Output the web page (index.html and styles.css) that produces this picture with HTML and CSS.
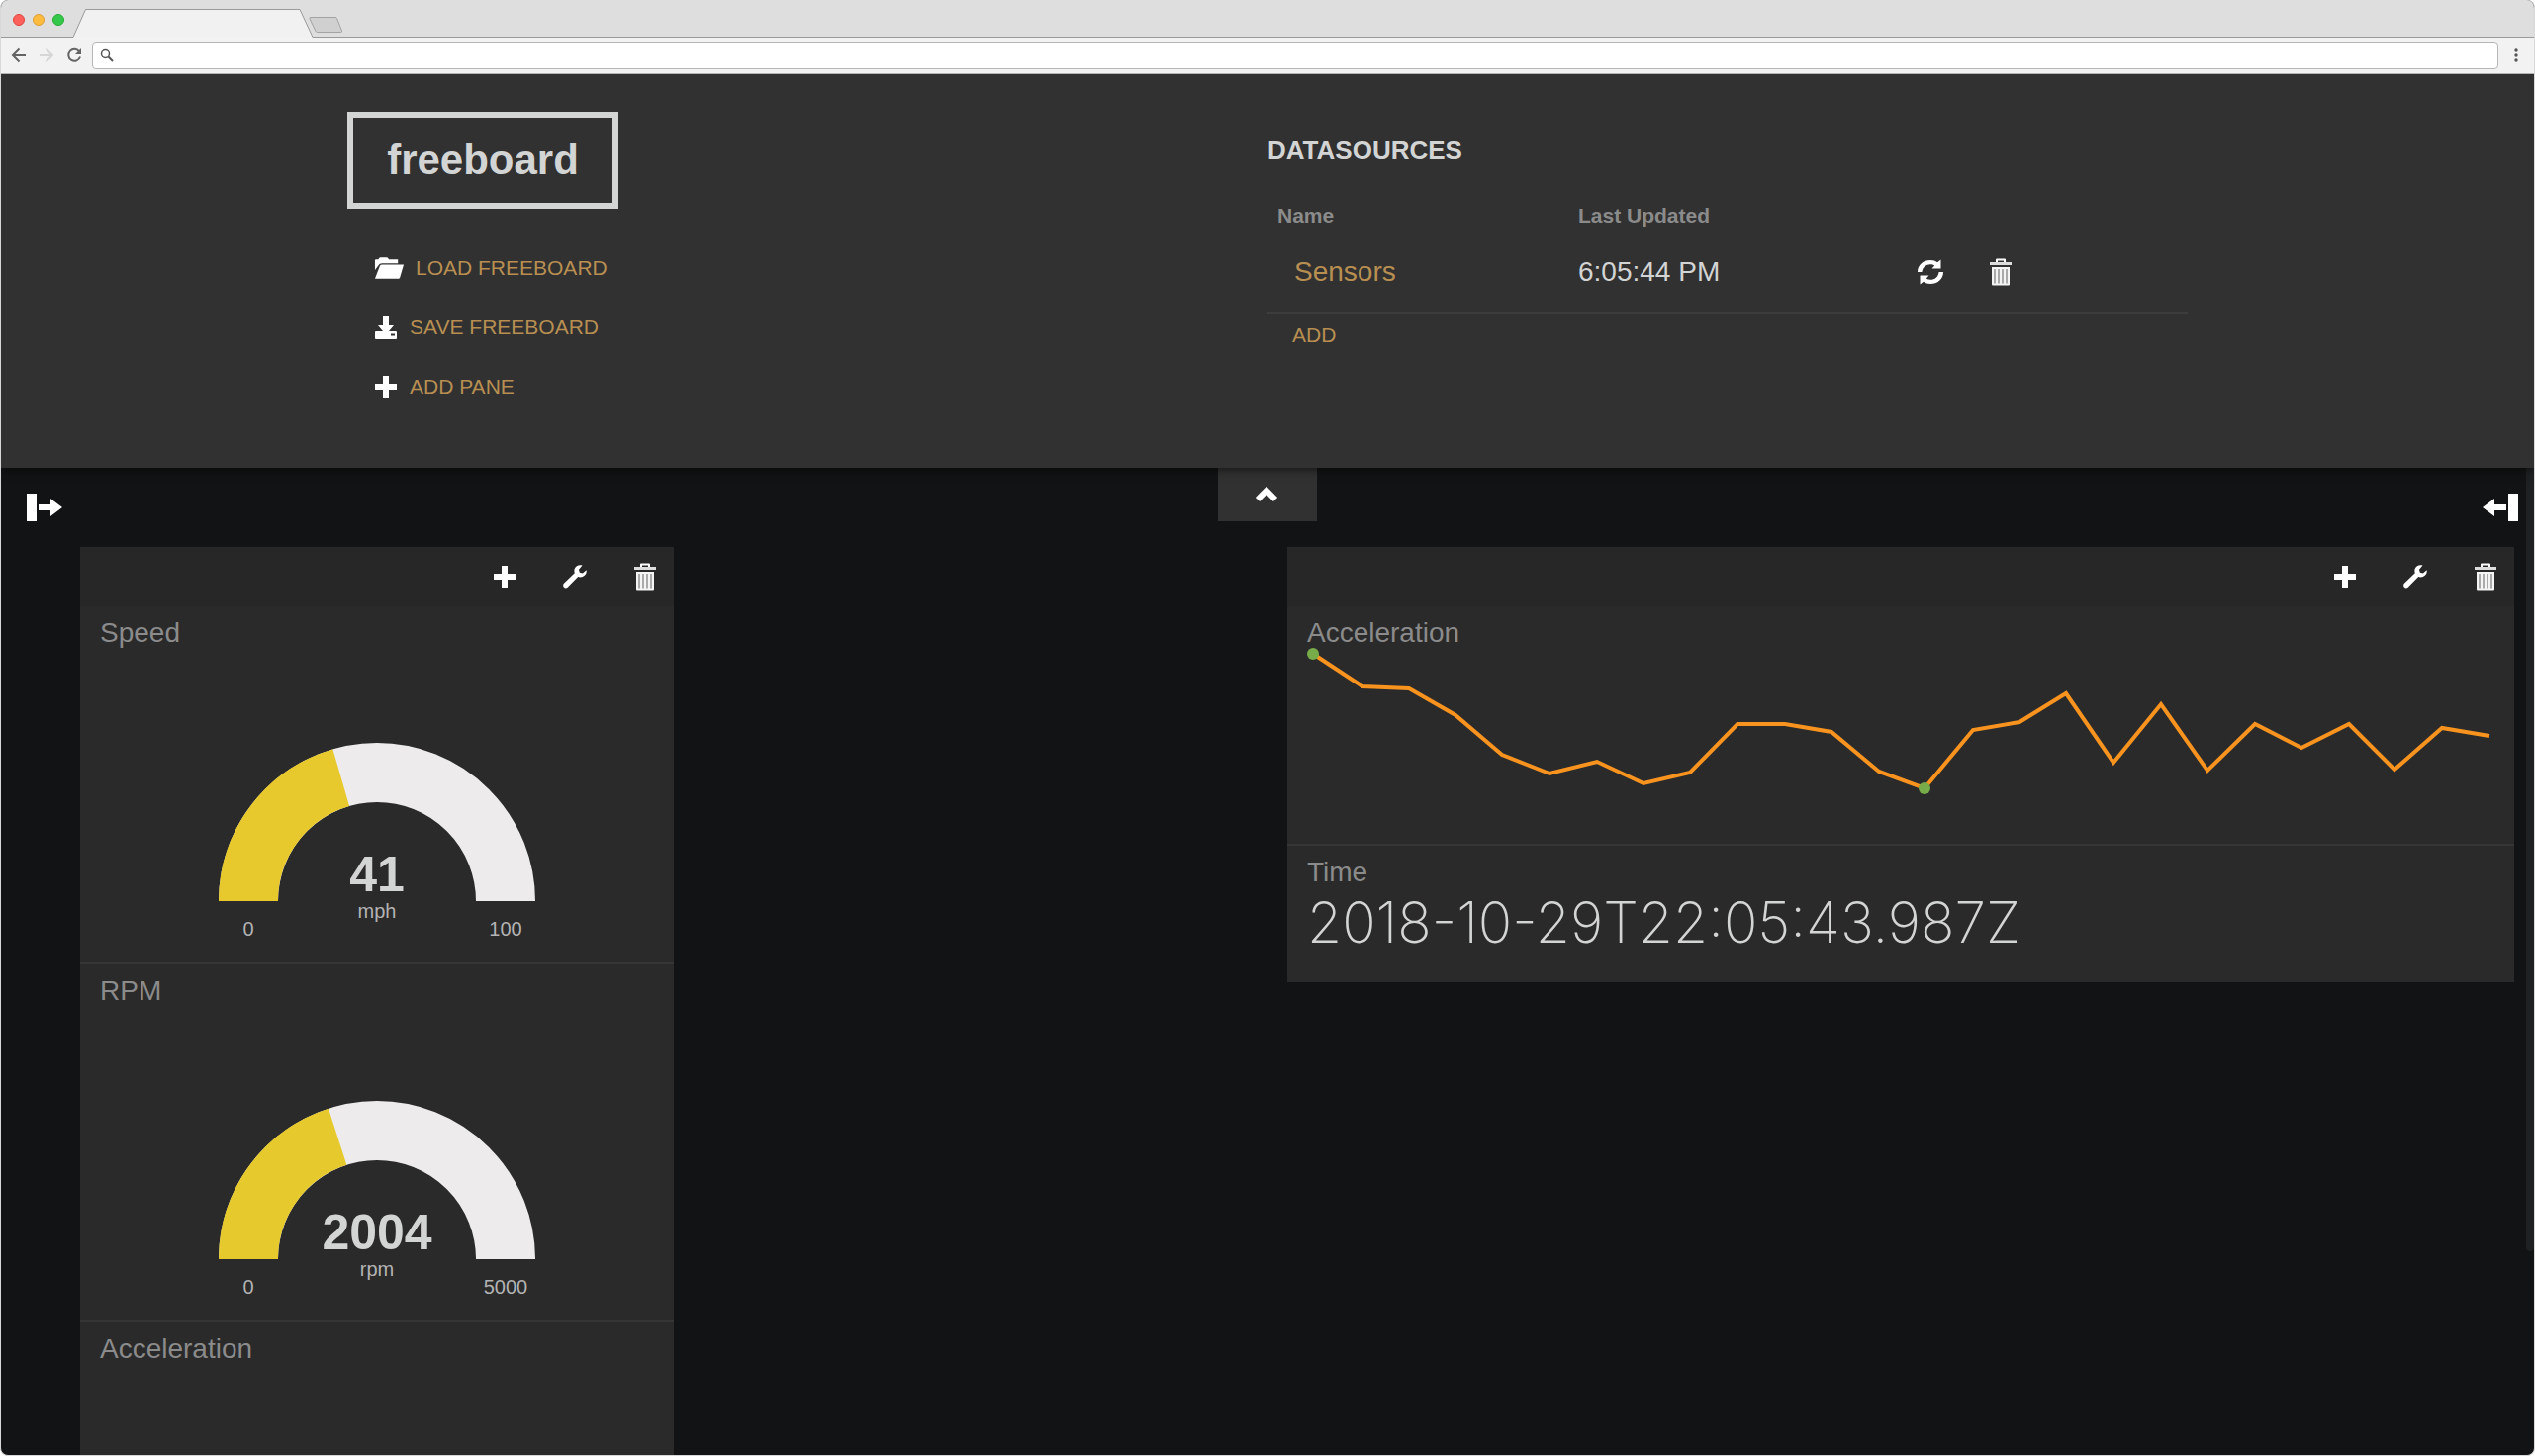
FILE: index.html
```html
<!DOCTYPE html>
<html lang="en">
<head>
<meta charset="utf-8">
<title>freeboard</title>
<link rel="stylesheet" href="styles.css">
</head>
<body>
<svg class="symbols" aria-hidden="true">
  <symbol id="i-plus" viewBox="0 0 24 24"><path d="M9 1h6v8h8v6h-8v8H9v-8H1V9h8z"/></symbol>
  <symbol id="i-wrench" viewBox="0 0 24 24"><path d="M19.500 .6C16.500-.5 12.800 .8 11.700 4c-.5 1.500-.4 2.900 .1 4.200L.9 18.800c-1 1-1 2.700 0 3.800 1 1.100 2.700 1.100 3.700 .1L15.200 12.100c1.400 .5 3 .5 4.500 0 3-1.100 4.600-4 3.900-6.800l-3.700 3.200-3.100-.7-.8-3.100z"/></symbol>
  <symbol id="i-trash" viewBox="0 0 24 28"><path fill="#fff" d="M7 4V1.500Q7 .5 8 .5h8q1 0 1 1V4h-2V2.500H9V4z"/><path fill="#ddd" d="M1 4h22v3H1z"/><path fill="#f4f4f4" d="M3 9h18v17.500q0 1-1 1H4q-1 0-1-1z"/><path fill="#aaa" d="M5 11h2v14.500H5zM9 11h2v14.500H9zM13 11h2v14.500h-2zM17 11h2v14.500h-2z"/></symbol>
  <symbol id="i-refresh" viewBox="0 0 26 26"><path d="M0 13C0 5.500 6 1 13 1c3 0 5 .8 7 2.200L23.500 .5V9.500H14.500L17.200 6.400C16 5.600 14.700 5.200 13 5.200 8.500 5.200 5 8 4.400 13z"/><path d="M26 13c0 7.500-6 12-13 12-3 0-5-.8-7-2.200L2.500 25.500V16.500H11.500L8.800 19.600c1.200 .8 2.500 1.200 4.200 1.200 4.500 0 8-2.800 8.600-7.800z"/></symbol>
  <symbol id="i-folder" viewBox="0 0 31 24"><path d="M1 14V4q0-1 1-1h2.500l1-1.500q.3-.5 1-.5h7q.7 0 1 .5l1 1.500H25v4H8.500Q5.500 7 4.500 9.500z"/><path d="M8.500 8.500H31L27 22q-.3 1-1.400 1H1L6 10q.6-1.500 2.500-1.500z"/></symbol>
  <symbol id="i-save" viewBox="0 0 24 26"><path fill-rule="evenodd" d="M9 1h6v10h5l-5 6h7q1 0 1 1v6q0 1-1 1H2q-1 0-1-1v-6q0-1 1-1h7l-5-6h5zM17 19.500v2h4v-2z"/></symbol>
  <symbol id="i-arrow" viewBox="0 0 24 20"><path d="M0 7h12V1l12 9-12 9v-6H0z"/></symbol>
</svg>

<div class="browser">
  <div class="titlebar">
    <div class="lights"><i class="light red"></i><i class="light yellow"></i><i class="light green"></i></div>
    <svg class="tab" width="244" height="29" viewBox="0 0 244 29" aria-hidden="true"><path d="M0 28.500H1L13.500 .5H230L243 28.500H244V29H0z" fill="#f1f1f1"/><path d="M0 28.500H1L13.500 .5H230L243 28.500h1" fill="none" stroke="#999"/></svg>
    <svg class="newtab" width="36" height="18" viewBox="0 0 36 18" aria-hidden="true"><path d="M3 1.500h25q1 0 1.500 1l5 12.500q.5 1.500-1 1.500H10q-1.500 0-2-1L2 3q-.5-1.500 1-1.500z" fill="#d0d0d0" stroke="#a3a3a3"/></svg>
  </div>
  <div class="toolbar">
    <button class="nav" aria-label="Back"><svg width="16" height="16" viewBox="0 0 16 16"><path d="M15 8H2M8.500 1.500L2 8l6.500 6.500" fill="none" stroke="#646464" stroke-width="2"/></svg></button>
    <button class="nav" aria-label="Forward"><svg width="16" height="16" viewBox="0 0 16 16"><path d="M1 8h13M7.500 1.500L14 8l-6.500 6.500" fill="none" stroke="#d6d6d6" stroke-width="2"/></svg></button>
    <button class="nav" aria-label="Reload"><svg width="16" height="16" viewBox="0 0 16 16"><path d="M13.300 4.500A6 6 0 1 0 14 9.500" fill="none" stroke="#646464" stroke-width="2"/><path d="M15 1v6H9z" fill="#646464"/></svg></button>
    <label class="address">
      <svg width="14" height="14" viewBox="0 0 14 14" aria-hidden="true"><circle cx="5.500" cy="5.500" r="4" fill="none" stroke="#555" stroke-width="1.500"/><path d="M8.500 8.500L13 13" stroke="#555" stroke-width="2"/></svg>
      <input type="text" aria-label="Address">
    </label>
    <button class="more" aria-label="Menu"><svg width="4" height="16" viewBox="0 0 4 16"><g fill="#555"><circle cx="2" cy="3" r="1.700"/><circle cx="2" cy="8" r="1.700"/><circle cx="2" cy="13" r="1.700"/></g></svg></button>
  </div>

  <header class="admin">
    <div class="admin-inner">
      <div>
        <h1 class="logo">freeboard</h1>
        <nav class="menu">
          <button><svg width="30" height="24"><use href="#i-folder"/></svg>LOAD FREEBOARD</button>
          <button><svg width="24" height="26"><use href="#i-save"/></svg>SAVE FREEBOARD</button>
          <button><svg width="24" height="24"><use href="#i-plus"/></svg>ADD PANE</button>
        </nav>
      </div>
      <section class="sources">
        <h2>DATASOURCES</h2>
        <table>
          <thead><tr><th class="c-name">Name</th><th class="c-time">Last Updated</th><th></th></tr></thead>
          <tbody><tr>
            <td class="source"><a href="#sensors">Sensors</a></td>
            <td>6:05:44 PM</td>
            <td><div class="actions">
              <button aria-label="Refresh"><svg width="26" height="26"><use href="#i-refresh"/></svg></button>
              <button aria-label="Delete"><svg width="24" height="28"><use href="#i-trash"/></svg></button>
            </div></td>
          </tr></tbody>
        </table>
        <button class="add">ADD</button>
      </section>
    </div>
  </header>

  <main class="board">
    <button class="toggle" aria-label="Hide header"><svg width="24" height="18" viewBox="0 0 24 18"><path d="M3 14l9-9 9 9" fill="none" stroke="#fff" stroke-width="6"/></svg></button>
    <div class="scrollbar"></div>
    <div class="columns-bar">
      <button aria-label="Add column left"><i class="bar"></i><svg width="24" height="20"><use href="#i-arrow"/></svg></button>
      <button class="flip" aria-label="Add column right"><i class="bar"></i><svg width="24" height="20"><use href="#i-arrow"/></svg></button>
    </div>
    <div class="panes">
      <section class="pane">
        <div class="pane-head">
          <button aria-label="Add widget"><svg width="24" height="24"><use href="#i-plus"/></svg></button>
          <button aria-label="Edit pane"><svg width="24" height="24"><use href="#i-wrench"/></svg></button>
          <button aria-label="Delete pane"><svg width="24" height="28"><use href="#i-trash"/></svg></button>
        </div>
        <article class="widget tall">
          <h3>Speed</h3>
          <svg class="gauge" width="320" height="200" viewBox="0 0 320 200">
            <path class="track" d="M30 160A130 130 0 0 1 290 160"/>
            <path class="level" pathLength="100" stroke-dasharray="41 100" d="M30 160A130 130 0 0 1 290 160" stroke="#e8c92d"/>
            <text class="value" x="160" y="150">41</text><text x="160" y="177">mph</text><text x="30" y="195">0</text><text x="290" y="195">100</text>
          </svg>
        </article>
        <article class="widget tall">
          <h3>RPM</h3>
          <svg class="gauge" width="320" height="200" viewBox="0 0 320 200">
            <path class="track" d="M30 160A130 130 0 0 1 290 160"/>
            <path class="level" pathLength="100" stroke-dasharray="40.080 100" d="M30 160A130 130 0 0 1 290 160" stroke="#e6c92d"/>
            <text class="value" x="160" y="150">2004</text><text x="160" y="177">rpm</text><text x="30" y="195">0</text><text x="290" y="195">5000</text>
          </svg>
        </article>
        <article class="widget tall"><h3>Acceleration</h3></article>
      </section>

      <section class="pane wide">
        <div class="pane-head">
          <button aria-label="Add widget"><svg width="24" height="24"><use href="#i-plus"/></svg></button>
          <button aria-label="Edit pane"><svg width="24" height="24"><use href="#i-wrench"/></svg></button>
          <button aria-label="Delete pane"><svg width="24" height="28"><use href="#i-trash"/></svg></button>
        </div>
        <article class="widget">
          <h3>Acceleration</h3>
          <svg class="spark" viewBox="0 3 1200 150">
            <polyline points="6,8 56,41 103,43 150,70 197,110 245,129 293,117 340,139 387,128 435,79 483,79 530,87 578,127 624,144 673,85 720,77 767,48 815,118 863,59 910,126 958,79 1005,103 1053,79 1099,125 1147,83 1195,91"/>
            <circle cx="6" cy="8" r="6"/><circle cx="624" cy="144" r="6"/>
          </svg>
        </article>
        <article class="widget">
          <h3>Time</h3>
          <p class="stamp">2018-10-29T22:05:43.987Z</p>
        </article>
      </section>
    </div>
  </main>
</div>
</body>
</html>
```
FILE: styles.css
```css
* { box-sizing: border-box; }

body {
  margin: 0;
  background: #fff;
  font-family: "Liberation Sans", Arial, sans-serif;
}

h1, h2, h3, p { margin: 0; font-weight: normal; }

button {
  display: flex;
  align-items: center;
  padding: 0;
  border: 0;
  background: none;
  color: inherit;
  font: inherit;
  cursor: pointer;
}

svg { display: block; flex: none; fill: #fff; }

.symbols { position: absolute; width: 0; height: 0; }

.browser {
  display: flex;
  flex-direction: column;
  height: 100vh;
  overflow: hidden;
  border: 1px solid #d8d8d8;
  border-top: 0;
  border-radius: 8px;
  background: #121314;
}

/* Browser chrome */
.titlebar {
  display: flex;
  flex: none;
  align-items: flex-end;
  height: 38px;
  padding-left: 12px;
  border-bottom: 1px solid #999;
  background: #dedede;
}

.lights { display: flex; gap: 8px; width: 60px; padding-bottom: 11px; }
.light { width: 12px; height: 12px; border: 1px solid; border-radius: 50%; }
.red { background: #fc605c; border-color: #e0443e; }
.yellow { background: #fdbc40; border-color: #dea034; }
.green { background: #34c84a; border-color: #27aa35; }
.tab { position: relative; z-index: 3; margin-bottom: -1px; }
.newtab { margin: 0 0 3px -6px; }

.toolbar {
  position: relative;
  z-index: 2;
  display: flex;
  flex: none;
  align-items: center;
  height: 37px;
  padding: 0 16px 0 10px;
  border-bottom: 1px solid #b4b4b4;
  background: #f2f2f2;
}

.nav { padding-right: 12px; }

.address {
  display: flex;
  flex: 1;
  align-items: center;
  gap: 8px;
  height: 28px;
  margin: 0 16px 0 -2px;
  padding: 0 7px;
  border: 1px solid #b6b6b6;
  border-radius: 4px;
  background: #fff;
}

.address input { flex: 1; border: 0; outline: 0; background: none; font: inherit; }

/* Admin header */
.admin {
  position: relative;
  z-index: 1;
  flex: none;
  padding: 38px 0 70px;
  background: #313131;
  box-shadow: 0 0 10px rgba(0, 0, 0, .8);
  color: #d3d4d4;
}

.admin-inner {
  display: grid;
  grid-template-columns: 1fr 1fr;
  max-width: 1860px;
  margin: 0 auto;
}

.logo {
  width: 274px;
  border: 6px solid #d3d4d4;
  font-size: 42px;
  font-weight: bold;
  line-height: 86px;
  text-align: center;
}

.menu {
  display: flex;
  flex-direction: column;
  align-items: flex-start;
  gap: 36px;
  padding: 48px 0 0 27px;
}

.menu button, .add { height: 24px; color: #b88f51; font-size: 21px; line-height: 24px; }
.menu button { gap: 12px; }

.sources h2 {
  padding-top: 24px;
  font-size: 26px;
  font-weight: bold;
  line-height: 30px;
}

.sources table {
  width: 100%;
  margin-top: 39px;
  border-bottom: 2px solid #3d3d3d;
  border-collapse: collapse;
  table-layout: fixed;
  text-align: left;
}

.c-name { width: 304px; }
.c-time { width: 343px; }
.sources th { padding: 0 10px; color: #8b8b8b; font-size: 21px; line-height: 24px; }
.sources td { padding: 29px 10px 24px; font-size: 28px; line-height: 32px; }
.sources .source { padding-left: 27px; }
.source a { color: #b88f51; text-decoration: none; }
.actions { display: flex; gap: 46px; height: 32px; }
.add { margin: 10px 0 0 25px; }

/* Board */
.board { position: relative; flex: 1; min-height: 0; overflow: hidden; }

.toggle {
  position: absolute;
  top: 0;
  left: 50%;
  justify-content: center;
  width: 100px;
  height: 54px;
  margin-left: -50px;
  padding-right: 2px;
  background: #313131;
}

.scrollbar {
  position: absolute;
  top: 0;
  right: 0;
  width: 8px;
  height: 792px;
  border-radius: 0 0 4px 4px;
  background: #1f2022;
}

.columns-bar { display: flex; justify-content: space-between; padding: 26px 16px 26px 26px; }
.columns-bar button { gap: 2px; height: 28px; }
.bar { width: 10px; height: 28px; background: #fff; }
.flip { transform: scaleX(-1); }

.panes {
  display: grid;
  grid-template-columns: 600fr 620fr 1240fr;
  align-items: start;
  padding: 0 20px 0 80px;
}

.pane { background: #2a2a2a; }
.wide { grid-column: 3; }

.pane-head {
  display: flex;
  align-items: center;
  justify-content: flex-end;
  gap: 47px;
  height: 60px;
  padding-right: 17px;
  background: #272727;
}

.widget { padding: 11px 20px 23px; border-bottom: 2px solid #363636; }
.widget:last-child { border-bottom: 0; }
.tall { height: 362px; }
.widget h3 { color: #8b8b8b; font-size: 28px; line-height: 32px; }

.gauge { margin: 95px auto 0; overflow: visible; }
.gauge path { fill: none; stroke-width: 60; }
.track { stroke: #edebeb; }
.gauge text { fill: #b3b3b3; font-size: 20px; text-anchor: middle; }
.gauge .value { fill: #d3d4d4; font-size: 50px; font-weight: bold; }

.spark { width: 100%; margin-bottom: 24px; overflow: visible; }
.spark polyline { fill: none; stroke: #f7931e; stroke-width: 4; }
.spark circle { fill: #78ab49; }

.stamp {
  padding-bottom: 2px;
  color: #d3d4d4;
  font-family: Inter, sans-serif;
  font-size: 57px;
  font-weight: 200;
  line-height: 70px;
}
```
